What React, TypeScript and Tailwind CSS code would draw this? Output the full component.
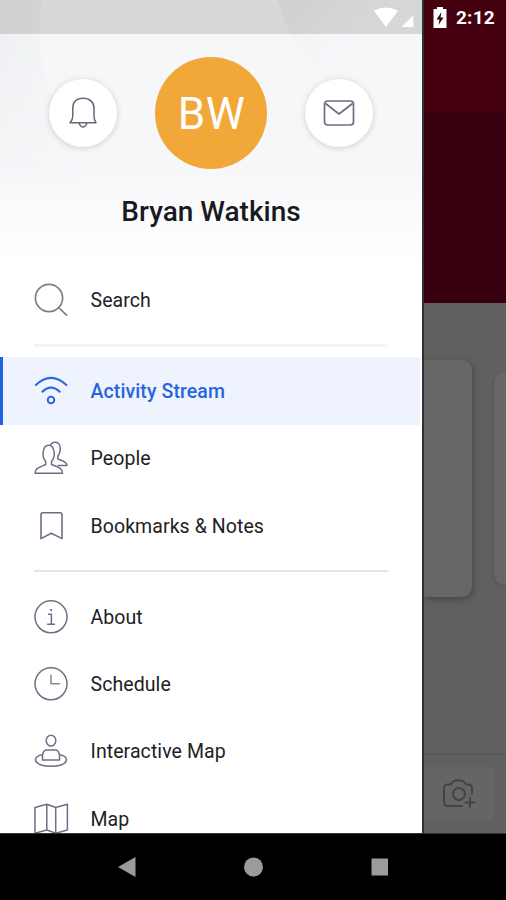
import React from "react";

const stroke = "#6b7084";

function Icon({ children, color = stroke, width = 1.5 }: { children: React.ReactNode; color?: string; width?: number }) {
  return (
    <svg width="36" height="36" viewBox="0 0 36 36" fill="none" stroke={color} strokeWidth={width} strokeLinejoin="round" className="shrink-0">
      {children}
    </svg>
  );
}

const SearchIcon = (
  <Icon color="#7c7f85" width={1.7}>
    <circle cx="16" cy="16" r="13.6" />
    <path d="M25.5 25.5 34.2 33.6" />
  </Icon>
);

const StreamIcon = (
  <Icon color="#2b68e0" width={2}>
    <path d="M2.3 12.5Q18-2.7 34 12.5M8.8 19.2Q18 10 27.3 19.2" />
    <circle cx="18" cy="27" r="3.3" />
  </Icon>
);

const PeopleIcon = (
  <Icon>
    <path d="M2 33.2H29.5C29.8 28.500 26 27.500 18.500 24.500V21.500C23 17 21.800 5.300 15.600 5.300C9.300 5.300 8.500 17 12.700 21.500V24.500C6 27.500 2 28.500 2 33.200Z" />
    <path d="M17.500 5C18.500 3.200 20.200 2.200 22 2.200C28.200 2.200 28.600 11 24.800 16.200V19C29 20.800 34 21.500 34 25.600H24.500" />
  </Icon>
);

const BookmarkIcon = (
  <Icon width={1.6}>
    <path d="M10 4.8H27Q29 4.8 29 6.8V30.6L18.3 25.3 8 30.6V6.8Q8 4.8 10 4.8Z" />
  </Icon>
);

const InfoIcon = (
  <Icon>
    <circle cx="18" cy="17.8" r="16" />
    <path d="M15 15.2H18.4V25M14.2 25.2H22" />
    <path d="M17.2 11H19" strokeWidth="1.8" />
  </Icon>
);

const ClockIcon = (
  <Icon>
    <circle cx="18" cy="17.8" r="16" />
    <path d="M18 8.5V17.7H27" stroke="#858898" />
  </Icon>
);

const PlaceIcon = (
  <Icon>
    <ellipse cx="18" cy="7.6" rx="4.8" ry="5.4" />
    <path d="M9.500 27V22Q10.500 17 13.500 17H22.500Q25.500 17 26.500 22V27Z" />
    <path d="M9 21.8C-1 23.5-.5 33.200 18 33.200C36.5 33.200 37 23.5 27 21.8" />
  </Icon>
);

const MapIcon = (
  <Icon>
    <path d="M2 6.500 13.8 3.300 22.7 6.500 34.4 3.300V29L22.7 32.2 13.8 29 2 32.2ZM13.8 3.300V29M22.7 6.500V32.2" />
  </Icon>
);

function Row({ icon, label, active = false }: { icon: React.ReactNode; label: string; active?: boolean }) {
  return (
    <div
      className={
        active
          ? "mr-0.5 flex h-[67.3px] shrink-0 items-center border-l-[3px] border-[#1f63e6] bg-[#eef3fe] pl-[30px] text-[#2565dd]"
          : "flex h-[67.3px] shrink-0 items-center pl-[33px] text-[#202126]"
      }
    >
      {icon}
      <span className={active ? "ml-[21.5px] pt-0.5 text-[19.5px] leading-6 font-medium tracking-[0.1px]" : "ml-[21.5px] pt-0.5 text-[19.5px] leading-6 tracking-[0.08px]"}>{label}</span>
    </div>
  );
}

function Divider({ className }: { className: string }) {
  return (
    <div className="mr-[34px] ml-[34px] flex h-6 shrink-0 items-center">
      <div className={className} />
    </div>
  );
}

function Header() {
  return (
    <header className="relative flex h-[266px] shrink-0 flex-col bg-linear-to-b from-[#f6f7f9] from-60% to-white">
      <svg className="absolute inset-0" width="422" height="266" viewBox="0 0 422 266">
        <defs>
          <linearGradient id="left" x1="0" y1="0" x2="1" y2="0">
            <stop offset="0" stopColor="#edeff1" />
            <stop offset="1" stopColor="#f6f7f9" />
          </linearGradient>
          <linearGradient id="right" x1="0" y1="0" x2="1" y2="0.6">
            <stop offset="0" stopColor="#ebecee" stopOpacity="0.9" />
            <stop offset="0.7" stopColor="#f6f7f9" stopOpacity="0" />
          </linearGradient>
          <linearGradient id="fade" x1="0" y1="0" x2="0" y2="1">
            <stop offset="0.1" stopColor="white" />
            <stop offset="0.75" stopColor="white" stopOpacity="0" />
          </linearGradient>
          <mask id="fadeMask">
            <rect width="422" height="266" fill="url(#fade)" />
          </mask>
        </defs>
        <path d="M0 0H42C36 50 42 100 80 160V240H0Z" fill="url(#left)" mask="url(#fadeMask)" />
        <path d="M278 0C288 36 305 64 335 90H422V0Z" fill="url(#right)" mask="url(#fadeMask)" />
      </svg>
      <div className="relative flex h-[34px] shrink-0 items-center justify-end bg-black/13 pr-[7px]">
        <svg width="42" height="24" viewBox="0 0 42 24" fill="white">
          <path d="M1 5.8Q13-.8 25 5.8L13 22Z" />
          <path d="M41 9V22H28Z" opacity=".35" />
          <path d="M40 11V22H29Z" />
        </svg>
      </div>
      <div className="relative mt-[23px] flex h-28 items-center justify-center gap-[38px]">
        <div className="flex size-[68px] items-center justify-center rounded-full bg-white shadow-[0_1px_6px_rgba(0,0,0,0.17)]">
          <svg width="30" height="34" viewBox="0 0 30 34" fill="none" stroke="#666a78" strokeWidth="1.5" strokeLinejoin="round">
            <path d="M15 2.2C8.5 2.2 4.8 6 4.8 12V20Q4.8 24 2 26.7H28Q26 24 26 20V12C26 6 21.5 2.2 15 2.2Z" />
            <path d="M11 27Q12.5 31 15 31T19 27" />
          </svg>
        </div>
        <div className="flex size-28 items-center justify-center rounded-full bg-[#f2a838] text-[44px] leading-none tracking-[0.5px] text-white">
          <span className="pt-0.5 pl-px">BW</span>
        </div>
        <div className="flex size-[68px] items-center justify-center rounded-full bg-white shadow-[0_1px_6px_rgba(0,0,0,0.17)]">
          <svg width="32" height="28" viewBox="0 0 32 28" fill="none" stroke="#6b6f85" strokeWidth="1.7" strokeLinejoin="round">
            <rect x="1.5" y="2" width="29" height="24" rx="3" />
            <path d="M2.5 4.5 16 15 29.5 4.5" />
          </svg>
        </div>
      </div>
      <h1 className="relative mt-[27px] text-center text-[28px] leading-8 font-medium text-[#191a1f]">Bryan Watkins</h1>
    </header>
  );
}

function Drawer() {
  return (
    <aside className="flex w-[422px] shrink-0 flex-col overflow-hidden bg-white">
      <Header />
      <Row icon={SearchIcon} label="Search" />
      <Divider className="h-[3px] w-full bg-[#f4f4f5]" />
      <Row icon={StreamIcon} label="Activity Stream" active />
      <Row icon={PeopleIcon} label="People" />
      <Row icon={BookmarkIcon} label="Bookmarks & Notes" />
      <Divider className="h-[2px] w-full bg-[#e5e5e6]" />
      <Row icon={InfoIcon} label="About" />
      <Row icon={ClockIcon} label="Schedule" />
      <Row icon={PlaceIcon} label="Interactive Map" />
      <Row icon={MapIcon} label="Map" />
    </aside>
  );
}

function DimmedPage() {
  return (
    <main className="flex min-w-0 flex-1 flex-col overflow-hidden border-l-2 border-[#303232] bg-[#606060]">
      <div className="flex h-[113px] shrink-0 items-start bg-[#450010] pt-[6px] pl-2">
        <svg width="16" height="24" viewBox="0 0 16 24">
          <path d="M5 1H11V3H14.5V22H1.5V3H5Z" fill="white" />
          <path d="M9.5 6 4.5 13.5H7.5L6.5 19 11.5 11.5H8.5Z" fill="#30000a" />
        </svg>
        <span className="ml-[8px] text-[19px] leading-6 font-bold tracking-[0.2px] text-white">2:12</span>
      </div>
      <div className="h-[190px] shrink-0 bg-[#38000e]" />
      <div className="flex h-[450px] shrink-0 justify-between pt-[57px]">
        <div className="h-[237px] w-[48px] rounded-r-[10px] bg-[#666666] shadow-[1px_2px_6px_rgba(0,0,0,0.3)]" />
        <div className="mt-3 h-[213px] w-[12px] rounded-l-[10px] bg-[#666666] shadow-[0_1px_3px_rgba(0,0,0,0.2)]" />
      </div>
      <div className="flex flex-1 items-start border-t-2 border-[#545859] pt-[12px]">
        <div className="flex h-[53px] w-[70px] items-center justify-center rounded-r-md bg-[#656565]">
          <svg width="34" height="32" viewBox="0 0 34 32" fill="none" stroke="#424446" strokeWidth="2" strokeLinecap="round" strokeLinejoin="round">
            <path d="M20 28H6Q2 28 2 24V10.5Q2 6.5 6 6.5H8Q9.5 6.5 10.5 4.5Q11.5 2.5 13.5 2.5H19.5Q21.5 2.5 22.5 4.5Q23.5 6.5 25 6.5H26.5Q30 6.5 30 10V16" />
            <circle cx="17" cy="16" r="6" />
            <path d="M28 20V29M23.5 24.5H32.5" />
          </svg>
        </div>
      </div>
    </main>
  );
}

export default function App() {
  return (
    <div className="flex h-[900px] w-[506px] flex-col overflow-hidden bg-black font-['Roboto',sans-serif]">
      <div className="flex h-[833px] shrink-0 overflow-hidden">
        <Drawer />
        <DimmedPage />
      </div>
      <nav className="flex flex-1 items-center justify-center border-t border-[#333] bg-black">
        <svg width="270" height="20" viewBox="0 0 270 20" fill="#9b9b9b">
          <path d="M0 10 17.5 0V20Z" />
          <circle cx="135.500" cy="10" r="9.500" />
          <rect x="253.500" y="1.500" width="17" height="17" />
        </svg>
      </nav>
    </div>
  );
}
